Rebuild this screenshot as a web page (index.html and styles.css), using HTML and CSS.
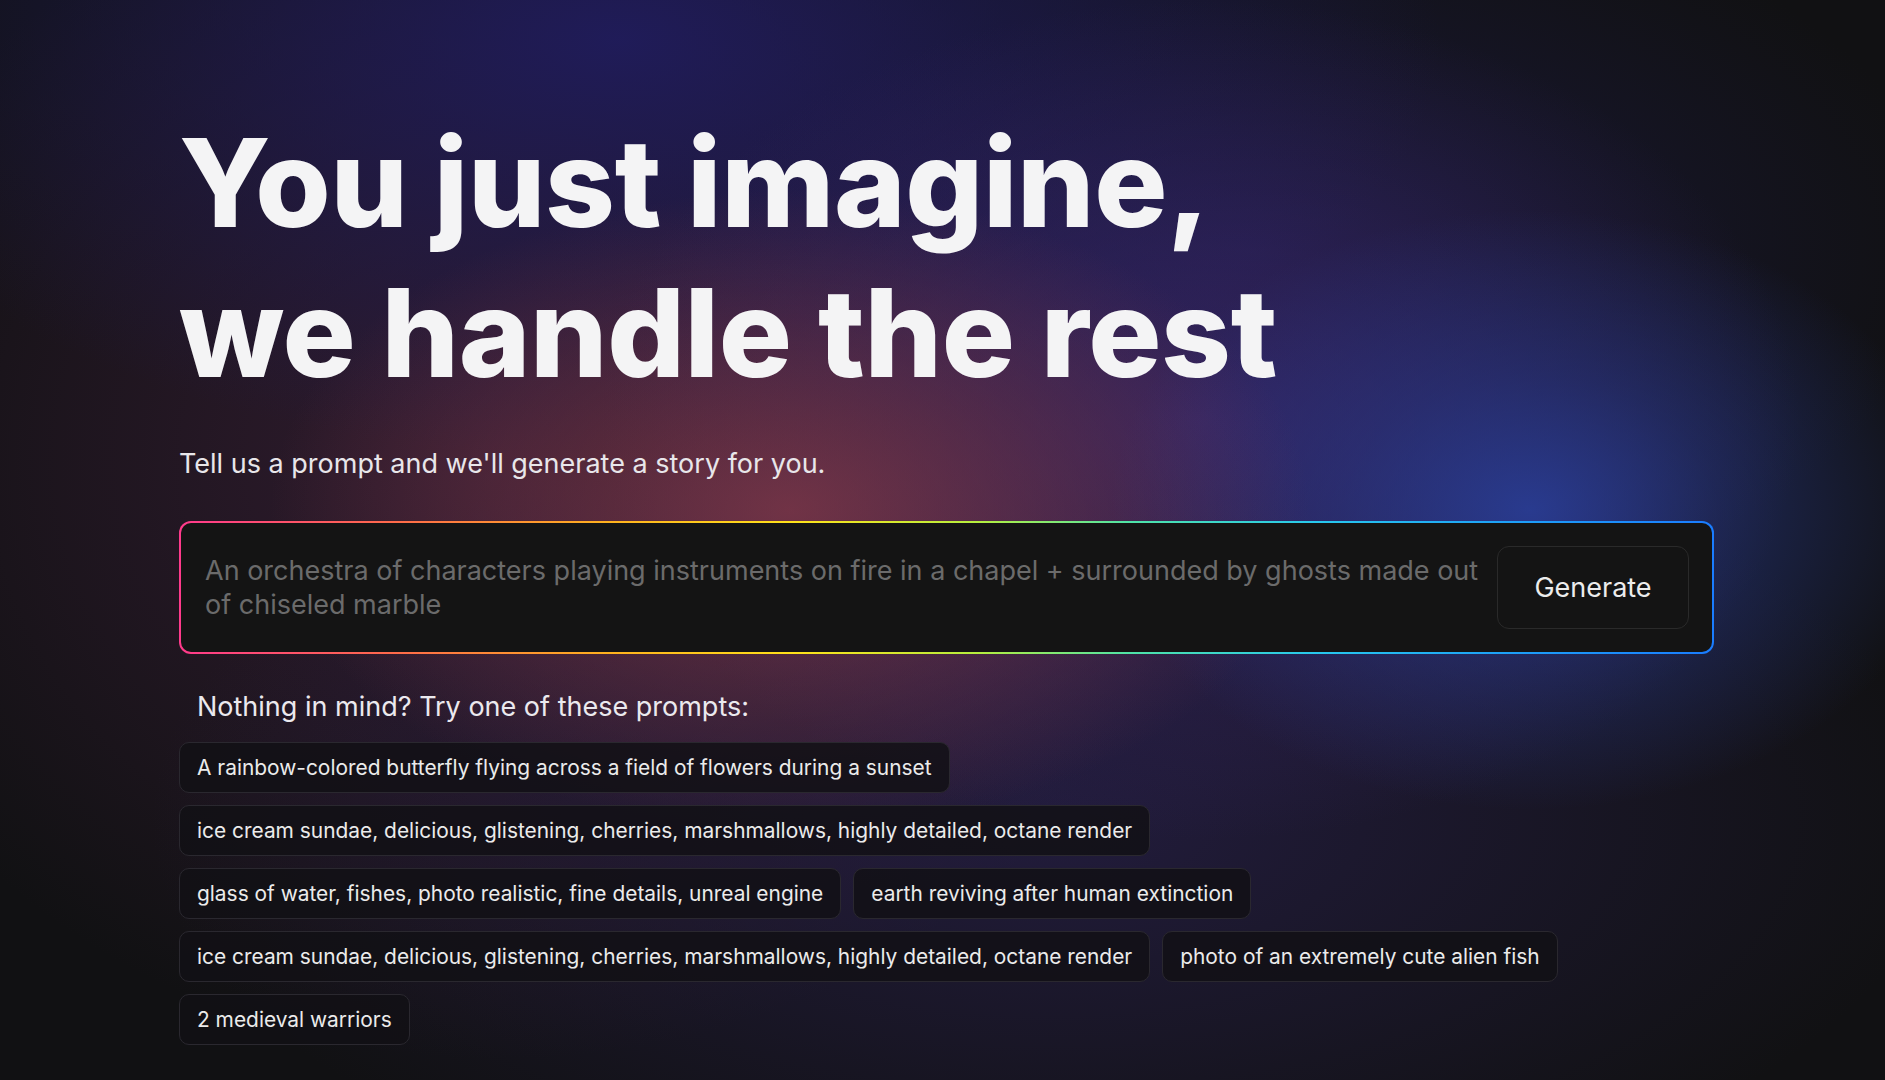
FILE: index.html
```html
<!DOCTYPE html>
<html lang="en">
<head>
<meta charset="utf-8">
<title>Story generator</title>
<link rel="stylesheet" href="styles.css">
</head>
<body>
<main class="page">
  <section class="hero">
    <h1 class="title">You just imagine,<br>we handle the rest</h1>
    <p class="subtitle">Tell us a prompt and we'll generate a story for you.</p>
    <form class="prompt-box">
      <textarea class="prompt-input" rows="2" placeholder="An orchestra of characters playing instruments on fire in a chapel + surrounded by ghosts made out of chiseled marble"></textarea>
      <button type="button" class="generate-btn">Generate</button>
    </form>
    <p class="suggest-label">Nothing in mind? Try one of these prompts:</p>
    <div class="chips">
      <button type="button" class="chip">A rainbow-colored butterfly flying across a field of flowers during a sunset</button>
      <button type="button" class="chip">ice cream sundae, delicious, glistening, cherries, marshmallows, highly detailed, octane render</button>
      <button type="button" class="chip">glass of water, fishes, photo realistic, fine details, unreal engine</button>
      <button type="button" class="chip">earth reviving after human extinction</button>
      <button type="button" class="chip">ice cream sundae, delicious, glistening, cherries, marshmallows, highly detailed, octane render</button>
      <button type="button" class="chip">photo of an extremely cute alien fish</button>
      <button type="button" class="chip">2 medieval warriors</button>
    </div>
  </section>
</main>
</body>
</html>
```

FILE: styles.css
```css
* { box-sizing: border-box; }

html, body {
  margin: 0;
  height: 100%;
}

body {
  font-family: Inter, "Noto Sans", "Liberation Sans", sans-serif;
  color: #f4f4f5;
  background-color: #111113;
  background-image:
    radial-gradient(ellipse 520px 320px at 790px 510px, rgba(125, 55, 72, 0.85), rgba(125, 55, 72, 0) 100%),
    radial-gradient(ellipse 420px 300px at 1530px 510px, rgba(42, 62, 152, 0.9) 0%, rgba(42, 62, 152, 0.45) 45%, rgba(42, 62, 152, 0) 100%),
    radial-gradient(ellipse 600px 420px at 1200px 420px, rgba(60, 40, 112, 0.75), rgba(60, 40, 112, 0) 100%),
    radial-gradient(ellipse 820px 420px at 620px 40px, rgba(32, 28, 92, 0.95), rgba(32, 28, 92, 0) 100%),
    radial-gradient(ellipse 700px 380px at 1250px 250px, rgba(30, 28, 75, 0.7), rgba(30, 28, 75, 0) 100%),
    radial-gradient(ellipse 900px 420px at 1050px 820px, rgba(45, 35, 88, 0.6), rgba(45, 35, 88, 0) 100%),
    radial-gradient(ellipse 700px 600px at 500px 460px, rgba(72, 35, 68, 0.6), rgba(72, 35, 68, 0) 100%);
  overflow: hidden;
}

.page {
  padding-top: 108px;
  padding-left: 179px;
}

.hero {
  width: 1535px;
}

.title {
  margin: 0;
  font-size: 122px;
  line-height: 150px;
  font-weight: 800;
  letter-spacing: -0.4px;
  color: #f4f4f5;
}

.subtitle {
  margin: 38px 0 0;
  font-size: 27px;
  line-height: 36px;
  color: #e8e6ea;
  font-weight: 400;
}

.prompt-box {
  margin-top: 39px;
  display: flex;
  align-items: center;
  gap: 10px;
  padding: 23px 23px 23px 24px;
  border: 2px solid transparent;
  border-radius: 12px;
  background:
    linear-gradient(#141414, #141414) padding-box,
    linear-gradient(90deg, #ff3a8c 0%, #ff6a4a 14%, #ffb21e 28%, #ffe21a 40%, #b6ef3e 52%, #4fe3a8 62%, #28c9ee 74%, #1ea2f7 86%, #1a7cff 100%) border-box;
}

.prompt-input {
  flex: 1;
  height: 67px;
  padding: 0;
  border: none;
  outline: none;
  resize: none;
  overflow: hidden;
  background: transparent;
  font-family: inherit;
  font-size: 27px;
  line-height: 33.5px;
  color: #e5e5e5;
}

.prompt-input::placeholder {
  color: #6b6b6b;
}

.generate-btn {
  width: 192px;
  height: 83px;
  flex: none;
  background: #141414;
  border: 1px solid #2a2a2a;
  border-radius: 12px;
  color: #ececec;
  font-family: inherit;
  font-size: 27px;
  font-weight: 400;
}

.suggest-label {
  margin: 35px 0 0;
  padding-left: 18px;
  font-size: 27px;
  line-height: 36px;
  color: #ebe9ee;
}

.chips {
  margin-top: 17px;
  max-width: 1420px;
  display: flex;
  flex-wrap: wrap;
  gap: 12px;
}

.chip {
  padding: 11px 17px;
  border: 1px solid #2a282f;
  border-radius: 10px;
  background: rgba(18, 17, 21, 0.85);
  color: #ebebeb;
  font-family: inherit;
  font-size: 20.9px;
  line-height: 27px;
  font-weight: 400;
  text-align: left;
}
```
